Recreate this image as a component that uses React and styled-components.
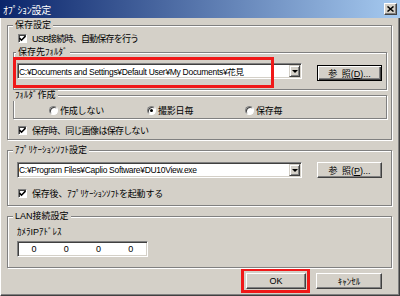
import React from 'react';
import styled, { createGlobalStyle } from 'styled-components';

const GlobalStyle = createGlobalStyle`
  html, body {
    margin: 0;
    padding: 0;
    background: #d4d0c8;
  }
  body {
    font-family: "Liberation Sans", "Noto Sans CJK JP", sans-serif;
    font-size: 9px;
    color: #000;
  }
`;

const Window = styled.div`
  width: 400px;
  height: 296px;
  display: flex;
  flex-direction: column;
  overflow: hidden;
  background: #d4d0c8;
`;

const TitleBar = styled.div`
  height: 18px;
  flex: none;
  display: flex;
  align-items: center;
  justify-content: space-between;
  padding: 0 3px;
  background: linear-gradient(to right, #0a246a, #a6caf0);
  color: #fff;
  font-size: 10px;
  letter-spacing: -0.3px;
`;

const CloseButton = styled.span`
  width: 13px;
  height: 12px;
  box-sizing: border-box;
  background: #d4d0c8;
  border: 1px solid;
  border-color: #fff #404040 #404040 #fff;
  box-shadow: inset -1px -1px #808080;
  display: flex;
  align-items: center;
  justify-content: center;
`;

const Body = styled.div`
  flex: 1;
  display: flex;
  flex-direction: column;
  padding: 2px 7px 0 6px;
  border-left: 1px solid #fff;
  border-right: 1px solid #404040;
  border-bottom: 1px solid #404040;
  box-shadow: inset -1px -1px #808080;
`;

const Group = styled.fieldset`
  position: relative;
  margin: ${p => p.$mt || 0}px 0 0 0;
  padding: ${p => p.$pad};
  border: 1px solid #808080;
  box-shadow: inset 1px 1px 0 #fff, 1px 1px 0 #fff;
  min-width: 0;
  display: flex;
  flex-direction: column;
`;

const Legend = styled.legend`
  padding: 0 2px;
  margin-left: ${p => p.$ml || 0}px;
  height: 11px;
  line-height: 11px;
  background: #d4d0c8;
`;

const CheckRow = styled.label`
  display: flex;
  align-items: center;
  gap: 5px;
  height: 12px;
  margin: ${p => p.$m || '0'};
  letter-spacing: ${p => p.$ls || 0}px;
`;

const Box = styled.span`
  width: 9px;
  height: 9px;
  box-sizing: border-box;
  background: #fff;
  border: 1px solid;
  border-color: #808080 #fff #fff #808080;
  box-shadow: inset 1px 1px #404040;
  display: flex;
`;

const RadioRow = styled.div`
  display: flex;
  height: 12px;
  padding-left: 35px;
  letter-spacing: -0.2px;
`;

const RadioItem = styled.label`
  width: 98px;
  display: flex;
  align-items: center;
  gap: 2px;
`;

const RadioDot = styled.span`
  width: 9px;
  height: 9px;
  box-sizing: border-box;
  border-radius: 50%;
  background: #fff;
  border: 1px solid;
  border-color: #808080 #fff #fff #808080;
  box-shadow: inset 1px 1px #404040;
  display: flex;
  align-items: center;
  justify-content: center;
  &::after {
    content: "";
    width: 3px;
    height: 3px;
    border-radius: 50%;
    background: ${p => (p.$on ? '#000' : 'transparent')};
  }
`;

const ComboRow = styled.div`
  position: relative;
  display: flex;
  align-items: flex-start;
  gap: 15px;
`;

const Combo = styled.div`
  width: 285px;
  height: 16px;
  box-sizing: border-box;
  background: #fff;
  border: 1px solid;
  border-color: #808080 #fff #fff #808080;
  box-shadow: inset 1px 1px #404040, inset -1px -1px #d4d0c8;
  display: flex;
  align-items: center;
  padding-left: 1px;
  font-size: 8.5px;
  letter-spacing: -0.3px;
  white-space: nowrap;
`;

const ComboText = styled.span`
  flex: 1;
  overflow: hidden;
`;

const ArrowButton = styled.span`
  width: 11px;
  height: 12px;
  margin-right: 1px;
  box-sizing: border-box;
  background: #d4d0c8;
  border: 1px solid;
  border-color: #d4d0c8 #404040 #404040 #d4d0c8;
  box-shadow: inset 1px 1px #fff, inset -1px -1px #808080;
  display: flex;
  align-items: center;
  justify-content: center;
  &::after {
    content: "";
    border-left: 3px solid transparent;
    border-right: 3px solid transparent;
    border-top: 3px solid #000;
  }
`;

const Button = styled.button`
  width: ${p => p.$w || 65}px;
  height: 16px;
  margin-top: ${p => p.$mt || 0}px;
  padding: 0;
  box-sizing: border-box;
  font: inherit;
  color: #000;
  background: #d4d0c8;
  border: 1px solid;
  border-color: ${p => (p.$default ? '#000' : '#fff #404040 #404040 #fff')};
  box-shadow: ${p =>
    p.$default
      ? 'inset 1px 1px #fff, inset -1px -1px #404040, inset -2px -2px #808080'
      : 'inset -1px -1px #808080'};
  white-space: nowrap;
`;

const Highlight = styled.span`
  position: absolute;
  left: -4px;
  top: -6px;
  width: 261px;
  height: 31px;
  box-sizing: border-box;
  border: 3px solid #f01818;
  pointer-events: none;
`;

const FieldLabel = styled.div`
  height: 12px;
  display: flex;
  align-items: center;
`;

const IpField = styled.div`
  width: 131px;
  height: 16px;
  margin-top: 4px;
  box-sizing: border-box;
  background: #fff;
  border: 1px solid;
  border-color: #808080 #fff #fff #808080;
  box-shadow: inset 1px 1px #404040, inset -1px -1px #d4d0c8;
  display: grid;
  grid-template-columns: repeat(4, 1fr);
  align-items: center;
  justify-items: center;
`;

const ButtonRow = styled.div`
  display: flex;
  justify-content: flex-end;
  align-items: flex-start;
  gap: 6px;
  height: 25px;
  padding-right: 10px;
`;

const RedFrame = styled.div`
  border: 3px solid #f01818;
  padding: 2px 1px 1px 2px;
`;

const Check = () => (
  <Box>
    <svg width="7" height="7" viewBox="0 0 7 7">
      <polyline points="0.5,3 2.5,5.2 6.5,1" fill="none" stroke="#000" strokeWidth="1.6" />
    </svg>
  </Box>
);

export default function App() {
  return (
    <>
      <GlobalStyle />
      <Window>
        <TitleBar>
          <span>ｵﾌﾟｼｮﾝ設定</span>
          <CloseButton>
            <svg width="7" height="6" viewBox="0 0 7 6">
              <path d="M0.5 0.5 L6.5 5.5 M6.5 0.5 L0.5 5.5" stroke="#000" strokeWidth="1.5" />
            </svg>
          </CloseButton>
        </TitleBar>
        <Body>
          <Group $pad="1px 4px 3px 5px">
            <Legend>保存設定</Legend>
            <CheckRow $m="0 0 0 5px" $ls={-0.8}>
              <Check />
              <span>USB接続時、自動保存を行う</span>
            </CheckRow>
            <Group $mt={3} $pad="5px 4px 8px 3px">
              <Legend $ml={-1}>保存先ﾌｫﾙﾀﾞ</Legend>
              <ComboRow>
                <Combo>
                  <ComboText>C:¥Documents and Settings¥Default User¥My Documents¥花見</ComboText>
                  <ArrowButton />
                </Combo>
                <Button $default $mt={2}>
                  参{'\u2002'}照(<u>D</u>)...
                </Button>
                <Highlight />
              </ComboRow>
            </Group>
            <Group $pad="3px 0 2px 0">
              <Legend $ml={-1}>ﾌｫﾙﾀﾞ作成</Legend>
              <RadioRow>
                <RadioItem>
                  <RadioDot />
                  <span>作成しない</span>
                </RadioItem>
                <RadioItem>
                  <RadioDot $on />
                  <span>撮影日毎</span>
                </RadioItem>
                <RadioItem>
                  <RadioDot />
                  <span>保存毎</span>
                </RadioItem>
              </RadioRow>
            </Group>
            <CheckRow $m="5px 0 0 5px" $ls={-0.7}>
              <Check />
              <span>保存時、同じ画像は保存しない</span>
            </CheckRow>
          </Group>

          <Group $mt={5} $pad="6px 9px 6px 9px">
            <Legend $ml={-4}>ｱﾌﾟﾘｹｰｼｮﾝｿﾌﾄ設定</Legend>
            <ComboRow>
              <Combo>
                <ComboText>C:¥Program Files¥Caplio Software¥DU10View.exe</ComboText>
                <ArrowButton />
              </Combo>
              <Button>
                参{'\u2002'}照(<u>P</u>)...
              </Button>
            </ComboRow>
            <CheckRow $m="9px 0 0 1px" $ls={-0.2}>
              <Check />
              <span>保存後、ｱﾌﾟﾘｹｰｼｮﾝｿﾌﾄを起動する</span>
            </CheckRow>
          </Group>

          <Group $mt={5} $pad="3px 9px 10px 9px">
            <Legend $ml={-4}>LAN接続設定</Legend>
            <FieldLabel>ｶﾒﾗIPｱﾄﾞﾚｽ</FieldLabel>
            <IpField>
              <span>0</span>
              <span>0</span>
              <span>0</span>
              <span>0</span>
            </IpField>
          </Group>

          <ButtonRow>
            <RedFrame>
              <Button $w={60}>OK</Button>
            </RedFrame>
            <Button $w={66} $mt={5}>
              ｷｬﾝｾﾙ
            </Button>
          </ButtonRow>
        </Body>
      </Window>
    </>
  );
}
